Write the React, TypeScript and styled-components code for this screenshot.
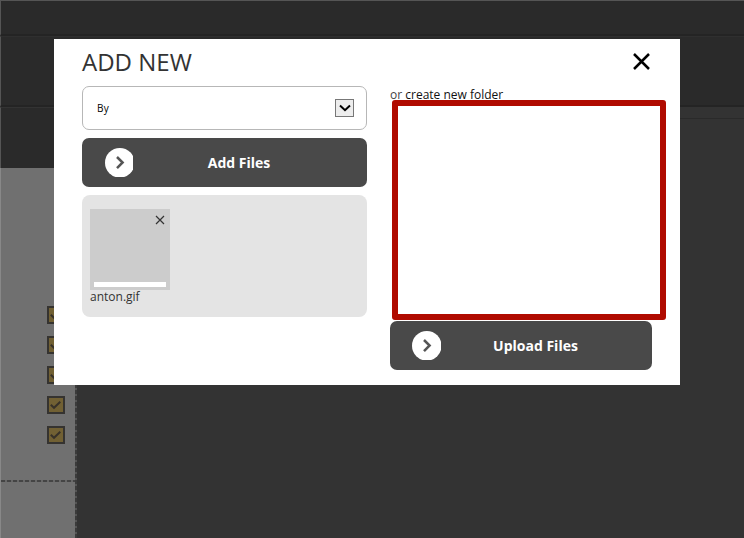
import React from "react";
import styled, { createGlobalStyle } from "styled-components";

const GlobalStyle = createGlobalStyle`
  *, *::before, *::after { box-sizing: border-box; }
  body { margin: 0; overflow: hidden; font-family: "Open Sans", sans-serif; background: #333; }
  button { font-family: inherit; cursor: pointer; }
`;

const Page = styled.div`
  position: relative;
  display: flex;
  flex-direction: column;
  width: 744px;
  height: 538px;
  overflow: hidden;
  background: #333;
`;

const TopBar = styled.header`
  height: 36px;
  flex: none;
  background: #2a2a2a;
  border-top: 1px solid #555;
  border-bottom: 2px solid #242424;
  border-left: 1px solid #555;
`;

const SubBar = styled.div`
  height: 71px;
  flex: none;
  background: #2a2a2a;
  border-top: 1px solid #2f2f2f;
  border-bottom: 2px solid #242424;
  border-left: 1px solid #555;
`;

const Body = styled.div`
  display: flex;
  flex: 1;
`;

const Sidebar = styled.aside`
  display: flex;
  flex-direction: column;
  width: 77px;
`;

const SidebarHead = styled.div`
  height: 61px;
  flex: none;
  background: #2a2a2a;
  border-top: 1px solid #333;
  border-left: 1px solid #555;
`;

const SidebarList = styled.div`
  display: flex;
  flex-direction: column;
  align-items: flex-end;
  flex: 1;
  background:
    repeating-linear-gradient(to bottom, #3b3b3b 0 4px, #555 4px 6px) right / 2px 100% no-repeat,
    #707070;
  border-left: 1px solid #888;
`;

const CheckStack = styled.div`
  display: flex;
  flex-direction: column;
  gap: 12px;
  width: 100%;
  height: 312px;
  padding: 138px 12px 0 46px;
`;

const Divider = styled.div`
  height: 2px;
  width: 74px;
  margin-right: 2px;
  background: repeating-linear-gradient(to right, #444 0 4px, #686868 4px 6px);
`;

const CheckBox = styled.span`
  display: flex;
  flex: none;
  width: 18px;
  height: 18px;
  border: 2px solid #353330;
  background: #716033;
`;

const Content = styled.main`
  flex: 1;
  background: #333;
`;

const ContentRule = styled.div`
  height: 12px;
  border-bottom: 1px solid #2a2a2a;
`;

const Dialog = styled.section`
  position: absolute;
  top: 39px;
  left: 54px;
  width: 626px;
  height: 346px;
  padding: 7px 28px 0;
  background: #fff;
`;

const DialogHeader = styled.header`
  display: flex;
  justify-content: space-between;
  height: 40px;
`;

const Title = styled.h1`
  margin: 0;
  color: #333;
  font-size: 24px;
  font-weight: 400;
  line-height: 31px;
`;

const CloseButton = styled.button`
  display: flex;
  width: 19px;
  height: 20px;
  margin-top: 7px;
  padding: 0;
  border: 0;
  background: none;
`;

const Columns = styled.div`
  display: grid;
  grid-template-columns: 285px 262px;
  column-gap: 23px;
`;

const LeftColumn = styled.div`
  display: flex;
  flex-direction: column;
  gap: 8px;
`;

const SelectField = styled.div`
  display: flex;
  align-items: center;
  justify-content: space-between;
  height: 44px;
  padding: 0 12px 0 14px;
  border: 1px solid #b7b7b7;
  border-radius: 7px;
  color: #000;
  font-size: 10px;
  font-weight: 500;
  letter-spacing: 0.4px;
`;

const SelectArrow = styled.span`
  display: flex;
  width: 19px;
  height: 18px;
  border: 1px solid #777;
  background: #ededed;
`;

const ActionButton = styled.button<{ $iconInset: number }>`
  display: flex;
  align-items: center;
  width: 100%;
  height: 49px;
  flex: none;
  padding: 0 0 0 ${({ $iconInset }) => $iconInset}px;
  border: 0;
  border-radius: 7px;
  background: #494949;
  color: #fff;
  font-size: 14px;
  font-weight: 700;
  text-align: left;
`;

const ActionLabel = styled.span`
  flex: 1;
  padding-right: 22px;
  text-align: center;
`;

const FilePanel = styled.div`
  height: 122px;
  padding: 14px 8px;
  border-radius: 8px;
  background: #e4e4e4;
`;

const FileCard = styled.figure`
  width: 80px;
  margin: 0;
`;

const Thumbnail = styled.div`
  display: flex;
  flex-direction: column;
  align-items: flex-end;
  justify-content: space-between;
  height: 81px;
  padding: 6px 4px 3px;
  background: #ccc;
`;

const RemoveButton = styled.button`
  display: flex;
  width: 10px;
  height: 10px;
  margin-right: 1px;
  padding: 0;
  border: 0;
  background: none;
`;

const ProgressBar = styled.div`
  width: 72px;
  height: 5px;
  background: #fff;
`;

const FileName = styled.figcaption`
  height: 16px;
  color: #333;
  font-size: 12px;
  line-height: 13px;
`;

const RightColumn = styled.div`
  display: flex;
  flex-direction: column;
`;

const FolderPrompt = styled.p`
  height: 14px;
  margin: 0;
  color: #444;
  font-size: 12px;
  line-height: 18px;
  white-space: nowrap;
`;

const FolderLink = styled.a`
  color: #111;
`;

const HighlightFrame = styled.div`
  flex: none;
  width: 274px;
  height: 220px;
  margin: 0 0 1px 2px;
  border: 6px solid #b00b00;
  border-radius: 3px;
  z-index: 1;
`;

const Arrow = ({ width }: { width: number }) => (
  <svg width={width} height="29" viewBox={`0 0 ${width} 29`} aria-hidden="true">
    <circle cx="14.8" cy="14.8" r="14.8" fill="#fff" />
    <path d="m12 9 5.6 5.5-5.6 5.7" fill="none" stroke="#555" strokeWidth="2.5" />
  </svg>
);

const Cross = ({ size, stroke, color }: { size: number; stroke: number; color: string }) => (
  <svg width={size} height={size} viewBox={`0 0 ${size} ${size}`} aria-hidden="true">
    <path
      d={`M1 1 ${size - 1} ${size - 1} M${size - 1} 1 1 ${size - 1}`}
      stroke={color}
      strokeWidth={stroke}
    />
  </svg>
);

const checks = [1, 2, 3, 4, 5];

export default function App() {
  return (
    <Page>
      <GlobalStyle />
      <TopBar />
      <SubBar />
      <Body>
        <Sidebar>
          <SidebarHead />
          <SidebarList>
            <CheckStack>
              {checks.map((id) => (
                <CheckBox key={id}>
                  <svg width="14" height="14" viewBox="0 0 14 14" aria-hidden="true">
                    <path d="m1.8 6.8 3.2 3 6.3-6" fill="none" stroke="#373129" strokeWidth="2" />
                  </svg>
                </CheckBox>
              ))}
            </CheckStack>
            <Divider />
          </SidebarList>
        </Sidebar>
        <Content>
          <ContentRule />
        </Content>
      </Body>
      <Dialog role="dialog" aria-labelledby="dialog-title">
        <DialogHeader>
          <Title id="dialog-title">ADD NEW</Title>
          <CloseButton aria-label="Close">
            <Cross size={17} stroke={2.5} color="#000" />
          </CloseButton>
        </DialogHeader>
        <Columns>
          <LeftColumn>
            <SelectField>
              <span>By</span>
              <SelectArrow>
                <svg width="17" height="16" viewBox="0 0 17 16" aria-hidden="true">
                  <path d="m4 5.5 5 4.7 5-4.7" fill="none" stroke="#000" strokeWidth="2" />
                </svg>
              </SelectArrow>
            </SelectField>
            <ActionButton $iconInset={23}>
              <Arrow width={28} />
              <ActionLabel>Add Files</ActionLabel>
            </ActionButton>
            <FilePanel>
              <FileCard>
                <Thumbnail>
                  <RemoveButton aria-label="Remove file">
                    <Cross size={10} stroke={1.2} color="#333" />
                  </RemoveButton>
                  <ProgressBar />
                </Thumbnail>
                <FileName>anton.gif</FileName>
              </FileCard>
            </FilePanel>
          </LeftColumn>
          <RightColumn>
            <FolderPrompt>
              or <FolderLink>create new folder</FolderLink>
            </FolderPrompt>
            <HighlightFrame />
            <ActionButton $iconInset={22}>
              <Arrow width={29} />
              <ActionLabel>Upload Files</ActionLabel>
            </ActionButton>
          </RightColumn>
        </Columns>
      </Dialog>
    </Page>
  );
}
